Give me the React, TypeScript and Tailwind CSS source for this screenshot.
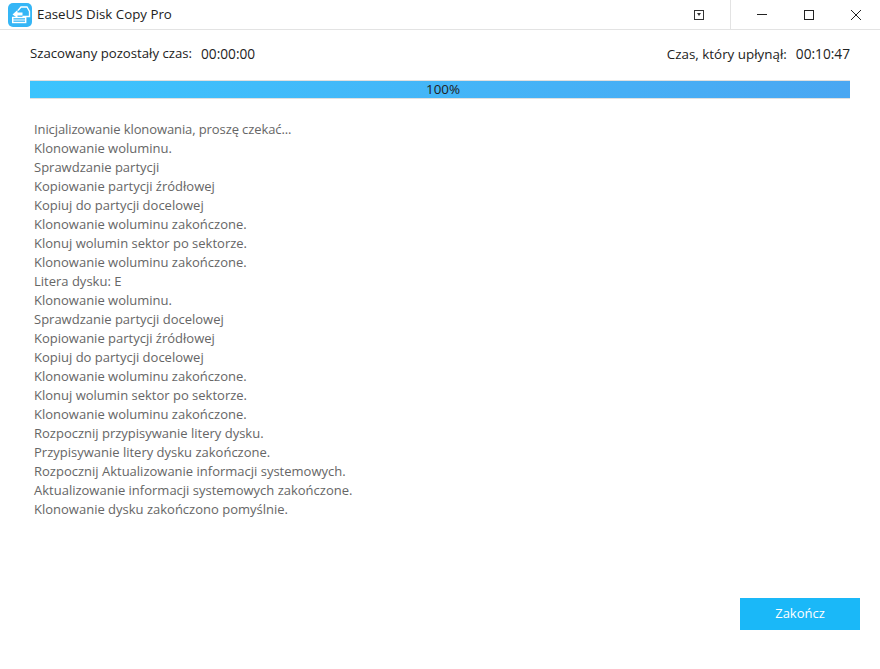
const logLines = [
  'Inicjalizowanie klonowania, proszę czekać...',
  'Klonowanie woluminu.',
  'Sprawdzanie partycji',
  'Kopiowanie partycji źródłowej',
  'Kopiuj do partycji docelowej',
  'Klonowanie woluminu zakończone.',
  'Klonuj wolumin sektor po sektorze.',
  'Klonowanie woluminu zakończone.',
  'Litera dysku: E',
  'Klonowanie woluminu.',
  'Sprawdzanie partycji docelowej',
  'Kopiowanie partycji źródłowej',
  'Kopiuj do partycji docelowej',
  'Klonowanie woluminu zakończone.',
  'Klonuj wolumin sektor po sektorze.',
  'Klonowanie woluminu zakończone.',
  'Rozpocznij przypisywanie litery dysku.',
  'Przypisywanie litery dysku zakończone.',
  'Rozpocznij Aktualizowanie informacji systemowych.',
  'Aktualizowanie informacji systemowych zakończone.',
  'Klonowanie dysku zakończono pomyślnie.',
];

function AppLogo() {
  return (
    <svg width="24" height="24" viewBox="0 0 24 24" className="shrink-0">
      <rect width="24" height="24" rx="5" fill="#35b6f6" />
      {/* back drive */}
      <path d="M10 7.500l3-3.500h6l2.500 4.500v5h-7" fill="none" stroke="#fff" strokeWidth="1.300" />
      {/* arrow */}
      <path d="M4.500 11.500l5-4.500v2.500h5v3h-5v2.500z" fill="#fff" />
      {/* front drive */}
      <rect x="4.700" y="14.500" width="13" height="5" fill="none" stroke="#fff" strokeWidth="1.400" />
      <path d="M4.700 17h13" stroke="#fff" strokeWidth="1" />
    </svg>
  );
}

export default function App() {
  return (
    <div className="w-[880px] h-[669px] bg-white flex flex-col font-['Open_Sans',sans-serif] text-[13px] overflow-hidden">
      {/* Title bar */}
      <div className="h-[30px] shrink-0 flex items-center border-b border-[#e3e3e3] pl-2">
        <AppLogo />
        <span className="ml-[5px] text-[13.3px] text-[#222]">EaseUS Disk Copy Pro</span>
        <div className="ml-auto flex items-center h-full">
          <div className="w-[10px] h-[10px] border border-[#333] flex items-center justify-center mr-[26px]">
            <div className="w-0 h-0 border-x-[2.500px] border-x-transparent border-t-[3px] border-t-[#333]" />
          </div>
          <div className="w-px h-full bg-[#e3e3e3]" />
          <div className="w-[149px] flex items-center pl-[26px] gap-[37px]">
            <svg width="10" height="10" viewBox="0 0 10 10" className="shrink-0">
              <path d="M0 4.500h10" stroke="#222" strokeWidth="1" />
            </svg>
            <svg width="10" height="10" viewBox="0 0 10 10" className="shrink-0">
              <rect x="0.500" y="0.500" width="9" height="9" fill="none" stroke="#222" strokeWidth="1" />
            </svg>
            <svg width="10" height="10" viewBox="0 0 10 10" className="shrink-0">
              <path d="M0 0l10 10M10 0L0 10" stroke="#222" strokeWidth="1" />
            </svg>
          </div>
        </div>
      </div>

      <div className="flex-1 flex flex-col px-[30px]">
        {/* Time row */}
        <div className="flex justify-between items-center h-[18px] mt-[15px] text-[#222]">
          <div className="flex items-center gap-[9px]">
            <span className="text-[13.2px]">Szacowany pozostały czas:</span>
            <span className="text-[13.7px]">00:00:00</span>
          </div>
          <div className="flex items-center gap-[9px]">
            <span className="text-[13.4px]">Czas, który upłynął:</span>
            <span className="text-[13.7px]">00:10:47</span>
          </div>
        </div>

        {/* Progress */}
        <div className="h-[19px] mt-[17px] pl-[6px] bg-gradient-to-r from-[#3cc4fd] to-[#4aa7f2] border-y border-[#e0e0e0] flex items-center justify-center text-[13.4px] text-[#222]">
          100%
        </div>

        {/* Log */}
        <div className="mt-[21px] pl-1 text-[#666] leading-[19px]">
          {logLines.map((line, i) => (
            <div key={i} className={i === 0 ? 'tracking-[-0.1px]' : ''}>
              {line}
            </div>
          ))}
        </div>

        <div className="mt-auto mb-[39px] -mr-[10px] flex justify-end">
          <button className="w-[120px] h-[32px] bg-[#1ab8f8] text-white">Zakończ</button>
        </div>
      </div>
    </div>
  );
}
